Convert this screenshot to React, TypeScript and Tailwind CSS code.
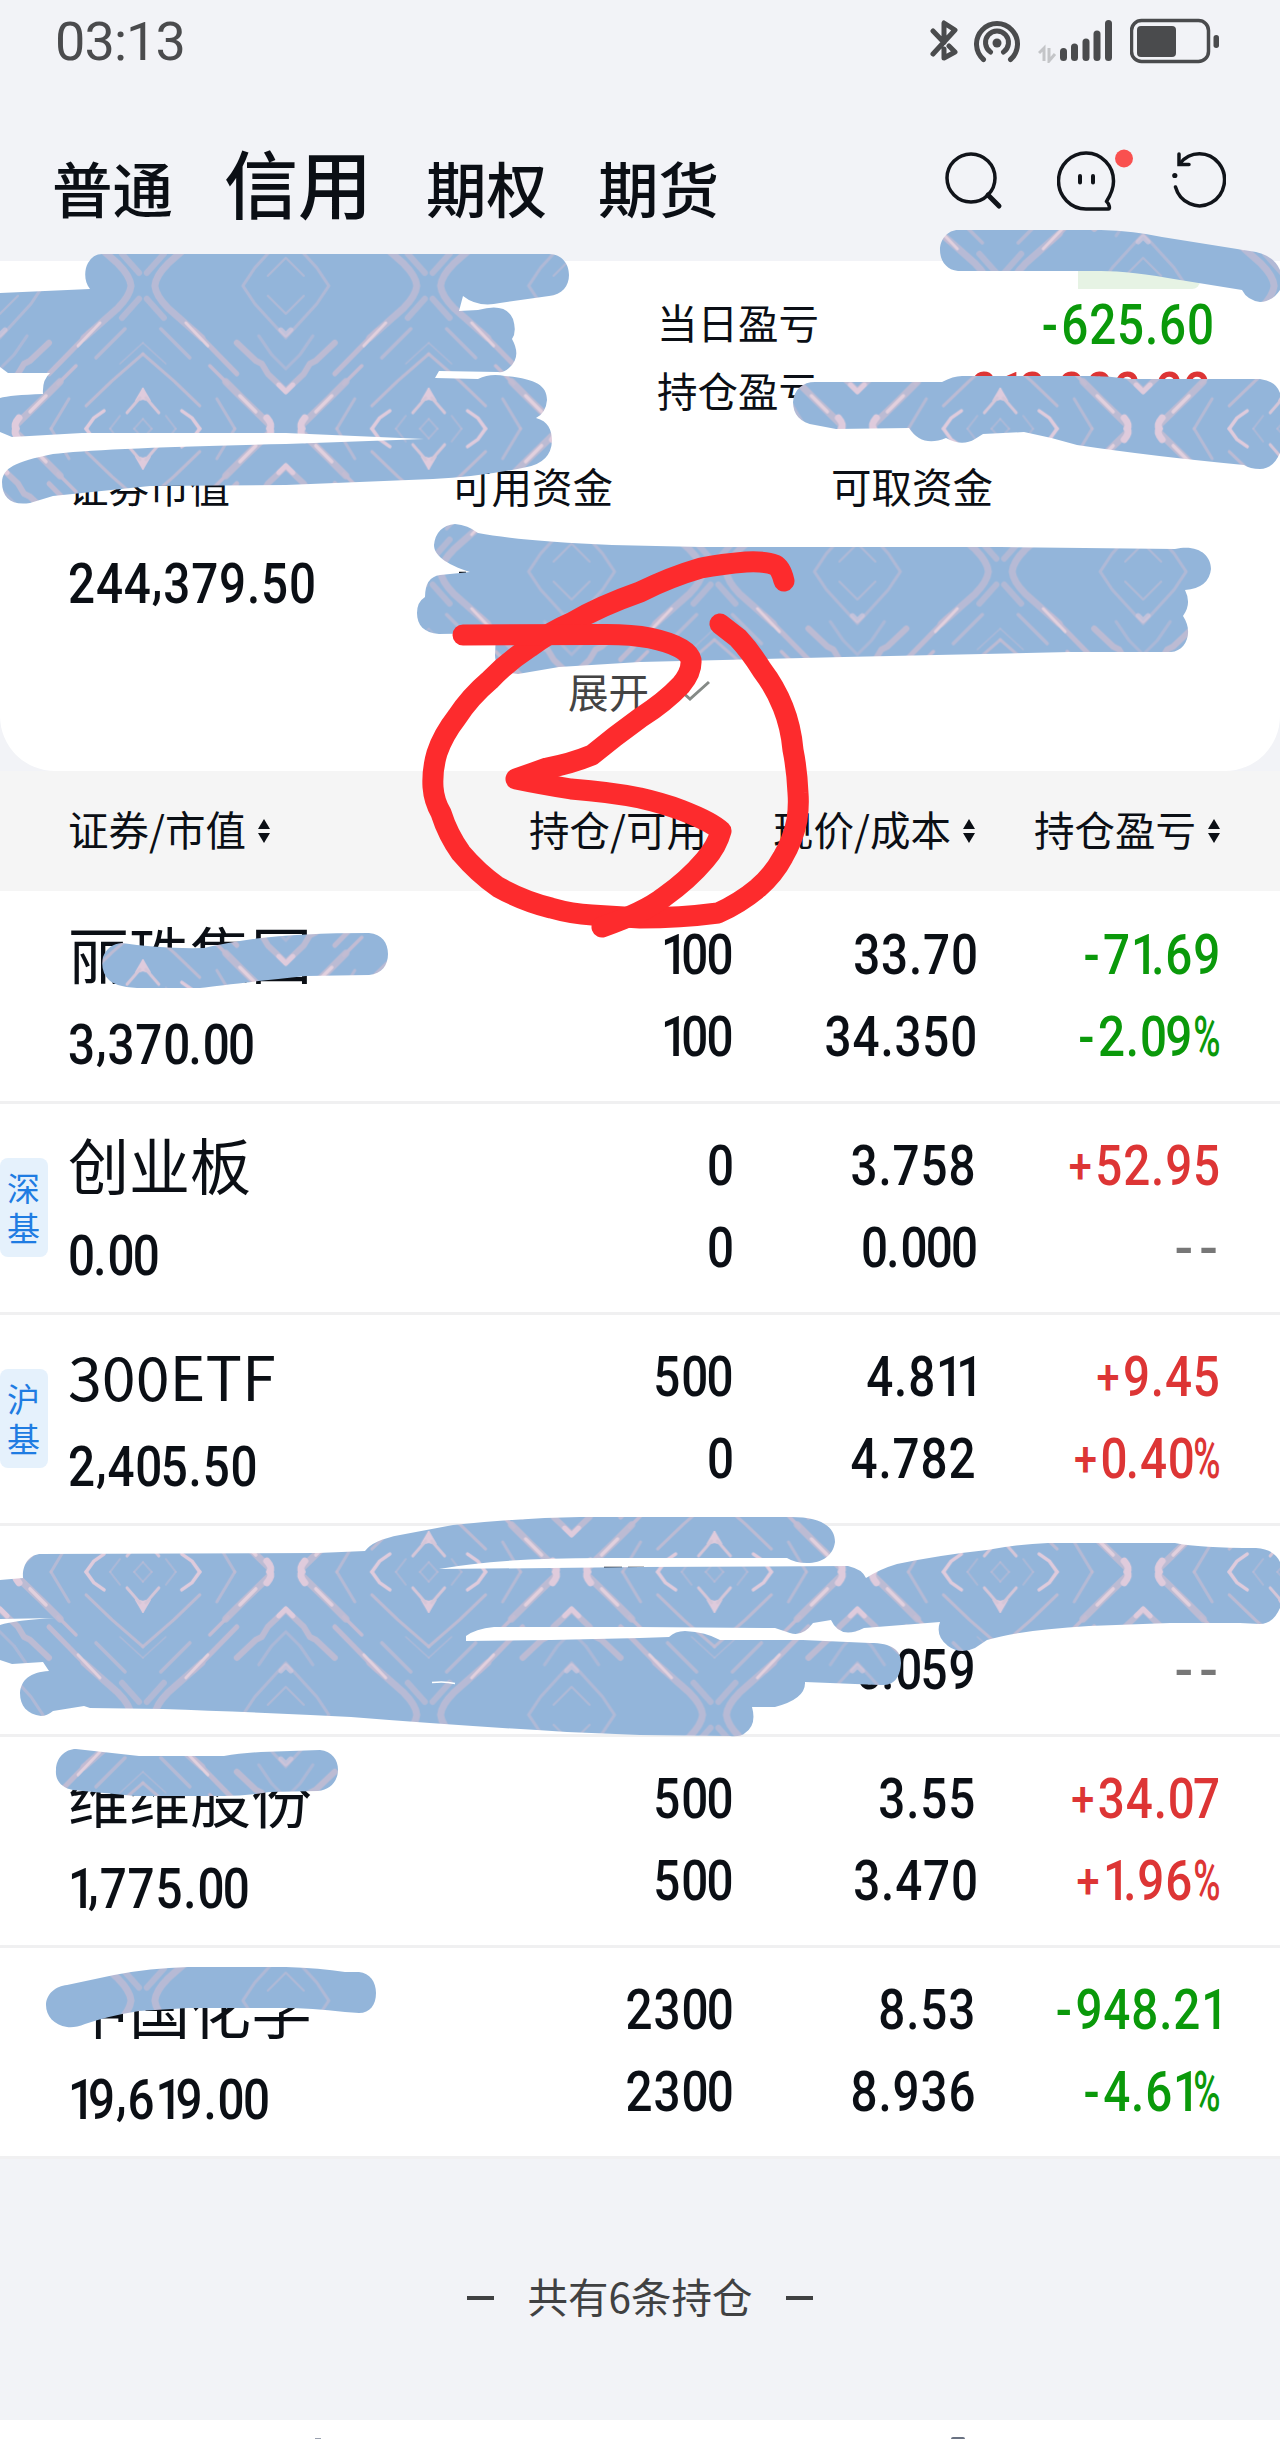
import clsx from 'clsx';

interface Holding {
  name: string;
  market?: string;
  value: string;
  amount: string;
  usable: string;
  price: string;
  cost: string;
  profit: string;
  ratio: string;
}

const holdings: Holding[] = [
  { name: '丽珠集团', value: '3,370.00', amount: '100', usable: '100', price: '33.70', cost: '34.350', profit: '-71.69', ratio: '-2.09%' },
  { name: '创业板', market: '深基', value: '0.00', amount: '0', usable: '0', price: '3.758', cost: '0.000', profit: '+52.95', ratio: '--' },
  { name: '300ETF', market: '沪基', value: '2,405.50', amount: '500', usable: '0', price: '4.811', cost: '4.782', profit: '+9.45', ratio: '+0.40%' },
  { name: '', value: '', amount: '', usable: '', price: '', cost: '0.059', profit: '', ratio: '--' },
  { name: '维维股份', value: '1,775.00', amount: '500', usable: '500', price: '3.55', cost: '3.470', profit: '+34.07', ratio: '+1.96%' },
  { name: '中国化学', value: '19,619.00', amount: '2300', usable: '2300', price: '8.53', cost: '8.936', profit: '-948.21', ratio: '-4.61%' },
];

const toneOf = (text: string) => {
  if (text === '--') return 'text-[#777777]';
  if (text.startsWith('+')) return 'text-[#dd3535]';
  if (text.startsWith('-')) return 'text-[#0a990a]';
  return 'text-[#0b0f15]';
};

const glyphClass: Record<string, string> = {
  '0': 'tracking-[-2px]',
  '1': 'tracking-[-8px]',
  ',': 'relative -top-[6px]',
  '+': 'text-[48px] relative -top-[2px] mr-[3px]',
  '-': 'mr-[3px]',
  '%': 'inline-block origin-left scale-x-[0.78] -mr-[9px]',
};

interface NumProps {
  text: string;
  left?: boolean;
  tone?: string;
}

const Num = ({ text, left, tone }: NumProps) => {
  const empty = text === '--';
  return (
    <span
      className={clsx(
        "relative top-[1px] inline-block whitespace-nowrap font-['Roboto',sans-serif] text-[55px] font-medium",
        left ? 'origin-left' : 'origin-right',
        empty ? 'tracking-[6px] -mr-[3px]' : 'scale-x-[0.865] tracking-[1px]',
        tone ?? toneOf(text)
      )}
    >
      {empty
        ? text
        : text.split(/([01,+%-])/).filter(Boolean).map((part, i) =>
            glyphClass[part] ? <span key={i} className={glyphClass[part]}>{part}</span> : part
          )}
    </span>
  );
};

const SortArrows = ({ hidden }: { hidden?: boolean }) => (
  <svg className={clsx('ml-[12px] w-[12px] h-[24px]', hidden && 'invisible')} viewBox="0 0 12 24" fill="#0b0f15">
    <path d="M6 0L12 10H0Z" />
    <path d="M6 24L0 14H12Z" />
  </svg>
);

const StatusBar = () => (
  <div className="h-[84px] pl-[55px] pr-[61px] flex items-center justify-between">
    <span className="font-['Roboto',sans-serif] text-[54px] leading-[84px] tracking-[-0.9px] text-[#4a4b4d]">03:13</span>
    <div className="-mt-[2px] flex items-center text-[#4a4b4d]">
      <svg className="w-[28px] h-[44px]" viewBox="0 0 28 44" fill="none" stroke="currentColor" strokeWidth="5" strokeLinecap="round" strokeLinejoin="round">
        <path d="M3 12L14 23.500M3 35L25 11L14 4V22M14 30V39L25 33L19 27" />
      </svg>
      <svg className="ml-[16px] w-[46px] h-[44px]" viewBox="0 0 46 44" fill="none" stroke="currentColor" strokeWidth="5" strokeLinecap="round">
        <circle cx="23" cy="24" r="4.500" fill="currentColor" stroke="none" />
        <path d="M16.500 33A11.500 11.500 0 1 1 29.500 33" />
        <path d="M9.500 40.500A20.500 20.500 0 1 1 36.500 40.500" />
      </svg>
      <svg className="ml-[18px] w-[74px] h-[44px]" viewBox="0 0 74 44" fill="currentColor">
        <path d="M1 34L6 29V42M11 29V42L17 35" fill="none" stroke="#c4c5c8" strokeWidth="3" />
        <rect x="22" y="29" width="7" height="13" rx="3.500" />
        <rect x="33" y="24.500" width="7" height="17.500" rx="3.500" />
        <rect x="44.500" y="19.500" width="7" height="22.500" rx="3.500" />
        <rect x="55.500" y="11.500" width="7" height="30.500" rx="3.500" />
        <rect x="67" y="1" width="7" height="41" rx="3.500" />
      </svg>
      <svg className="ml-[18px] w-[89px] h-[46px]" viewBox="0 0 89 46">
        <rect x="1.500" y="2.500" width="77" height="41" rx="10" fill="none" stroke="currentColor" strokeWidth="3.500" />
        <rect x="7" y="8" width="39" height="31" rx="4" fill="currentColor" />
        <rect x="83.500" y="17" width="5.500" height="13" rx="2.700" fill="currentColor" />
      </svg>
    </div>
  </div>
);

const TopTabs = () => (
  <div className="h-[177px] pl-[52px] pr-[54px] flex justify-between">
    <div className="flex items-baseline gap-[51px] pt-[47px] font-medium text-[60.500px] leading-[100px] text-[#0b0f15]">
      <span>普通</span>
      <span className="mr-[3px] text-[74px]">信用</span>
      <span>期权</span>
      <span>期货</span>
    </div>
    <div className="flex pt-[60px] text-[#11141a]">
      <svg className="w-[60px] h-[70px]" viewBox="0 0 60 70" fill="none" stroke="currentColor" strokeWidth="3.500">
        <circle cx="28" cy="34" r="24" />
        <path d="M45 51L56 62" strokeWidth="5" strokeLinecap="round" />
      </svg>
      <svg className="ml-[54px] w-[78px] h-[70px]" viewBox="0 0 78 70" fill="none" stroke="currentColor" strokeWidth="3.500" strokeLinejoin="round">
        <path d="M49.500 57.500C53 52 56.500 45 56.500 37.500A27.500 28 0 1 0 29 65H51.500C53.500 65 52 59.500 49.500 57.500Z" />
        <path d="M23 32V38.500M36 32V38.500" strokeWidth="4" strokeLinecap="round" />
        <circle cx="67" cy="14.500" r="9" fill="#f9504f" stroke="none" />
      </svg>
      <svg className="ml-[37px] w-[54px] h-[70px]" viewBox="0 0 54 70" fill="none" stroke="currentColor" strokeWidth="3.500">
        <path d="M8 19.500A25 26 0 1 1 3.500 43" strokeLinecap="round" />
        <path d="M7 10V20.500H17" strokeLinecap="round" />
        <circle cx="2.800" cy="31.500" r="2.600" fill="currentColor" stroke="none" />
      </svg>
    </div>
  </div>
);

const Summary = () => (
  <div className="relative h-[510px] bg-white rounded-b-[55px] text-[40.500px] text-[#0b0f15]">
    <div className="absolute left-[1078px] top-0 w-[122px] h-[28px] rounded-br-lg bg-[#e6f3e4]" />
    <div className="pt-[29px] ml-[657px] w-[555px]">
      <div className="h-[68px] flex items-center justify-between">
        <span className="-mt-1">当日盈亏</span>
        <Num text="-625.60" />
      </div>
      <div className="h-[68px] flex items-center justify-between">
        <span className="-mt-1">持仓盈亏</span>
        <Num text="212,222.22" tone="text-[#dd3535]" />
      </div>
    </div>
    <div className="mt-[26px] h-[68px] pl-[68px] grid grid-cols-[383px_380px_auto] items-center">
      <span>证券市值</span>
      <span>可用资金</span>
      <span>可取资金</span>
    </div>
    <div className="mt-[29px] h-[68px] pl-[68px] flex items-center">
      <Num text="244,379.50" left />
    </div>
    <div className="mt-[44px] h-[60px] pl-[568px] flex items-center text-[#444444]">
      <span>展开</span>
      <svg className="ml-[21px] w-[40px] h-[22px]" viewBox="0 0 40 22" fill="none" stroke="#858a87" strokeWidth="3">
        <path d="M1 2L20 19L39 2" />
      </svg>
    </div>
  </div>
);

const columns = ['证券/市值', '持仓/可用', '现价/成本', '持仓盈亏'];

const TableHead = () => (
  <div className="h-[120px] pl-[70px] grid grid-cols-[430px_231px_244px_245px] items-center bg-[#f5f5f5] text-[40.500px] text-[#0b0f15]">
    {columns.map((title, i) => (
      <div key={title} className={clsx('flex items-center whitespace-nowrap', i > 0 ? 'justify-end' : '-ml-[2px]')}>
        <span className="-mt-1">{title}</span>
        <SortArrows hidden={i === 1} />
      </div>
    ))}
  </div>
);

const HoldingRow = ({ item }: { item: Holding }) => (
  <div className="relative h-[211px] pl-[70px] grid grid-cols-[430px_231px_244px_245px] bg-white border-b-[3px] border-[#f0f0f1]">
    {item.market && (
      <div className="absolute left-0 top-[54px] w-[48px] h-[99px] px-[7px] pt-[9px] rounded-lg bg-[#e5f1fc] text-[33px] leading-[40px] break-all text-[#1f7ce2]">
        {item.market}
      </div>
    )}
    <div className="pt-[15px]">
      <p className="-ml-[2px] h-[90px] text-[61px] leading-[90px] text-[#0b0f15]">{item.name}</p>
      <p className="-ml-[2px] leading-[92px]"><Num text={item.value} left /></p>
    </div>
    {[
      [item.amount, item.usable],
      [item.price, item.cost],
      [item.profit, item.ratio],
    ].map(([first, second], i) => (
      <div key={i} className="pt-[20px] -mr-[1px] text-right leading-[82px]">
        <p className="h-[82px]"><Num text={first} /></p>
        <p className="h-[82px]"><Num text={second} /></p>
      </div>
    ))}
  </div>
);

// One quarter of the mirrored weave tile
const WeaveQuarter = () => (
  <g id="weave" fill="none" stroke="#c3bcd3" strokeLinecap="round" strokeLinejoin="round">
    <path d="M43 0L31 18L0 52" strokeWidth="3" opacity="0.6" />
    <path d="M18 10L0 28" strokeWidth="2" opacity="0.6" />
    <path d="M131 0Q130 10 118 22L84 52" strokeWidth="7" opacity="0.75" />
    <path d="M92 44L49 88" strokeWidth="5" opacity="0.9" />
    <path d="M100 37L78 60" strokeWidth="3" stroke="#e2d0dd" />
    <path d="M139 13L122 32" strokeWidth="6" opacity="0.65" />
    <path d="M125 43L112 56L96 72" strokeWidth="3.500" opacity="0.7" />
    <path d="M143 68L112 95L86 120" strokeWidth="3" opacity="0.85" />
    <path d="M143 57L120 78" strokeWidth="1.500" opacity="0.5" />
    <path d="M49 57L30 75L24 78L18 88L0 105" strokeWidth="6" opacity="0.85" />
    <path d="M7 99L0 106" strokeWidth="5" stroke="#dfcbdc" />
    <path d="M5 44L0 49" strokeWidth="5" stroke="#dfcbdc" opacity="0.6" />
    <path d="M27 50L14 69L0 83" strokeWidth="3" opacity="0.5" />
    <path d="M76 80L58 98" strokeWidth="3.500" />
    <path d="M60 96L41 115L17 138" strokeWidth="7" opacity="0.85" />
    <path d="M46 110L30 126" strokeWidth="3.500" stroke="#e2d0dd" />
    <path d="M19 132Q13 139 16 143" strokeWidth="7" stroke="#dfcbdc" />
    <path d="M143 103L136 115L143 113Z" strokeWidth="2" stroke="#dfcbdc" fill="#dfcbdc" />
    <path d="M140 112L127 127" strokeWidth="3" stroke="#d5c6d8" />
    <path d="M69 113L51 143" strokeWidth="3" opacity="0.7" />
    <path d="M104 125L94 132L86 143" strokeWidth="3.500" stroke="#dfcbdc" />
    <path d="M143 133L134 143M120 130L110 143" strokeWidth="1.800" opacity="0.5" />
  </g>
);

const brushPaths = [
  'M102 254H549C562 254 569 264 569 275S562 295 549 296L500 303Q478 308 463 296L459 311L478 310Q506 302 513 319Q517 332 512 339Q522 357 509 368Q504 373 498 372L439 371L435 378L478 379Q490 373 505 376C535 379 547 385 547 400Q546 413 536 418C548 421 552 430 552 441Q551 462 527 467Q480 477 433 479L286 485L150 486L53 496L30 503C12 506 2 498 2 482C3 468 14 462 53 454Q100 448 286 444L424 439L286 433H82L12 437L0 432V398Q10 395 43 394Q42 380 50 373L8 373L0 367V293L90 289C84 282 84 270 88 263Q93 254 102 254Z',
  'M958 230L1101 230Q1135 231 1162 237L1256 252Q1274 256 1280 270V290Q1272 302 1260 302Q1247 300 1242 290L1180 280Q1130 271 1101 271H958C946 270 940 260 940 250C940 239 948 230 958 230Z',
  'M815 382H942Q953 376 962 376H1089Q1110 376 1130 379H1260Q1276 381 1280 393V453Q1273 469 1260 469Q1250 469 1244 465Q1150 456 1077 445Q1050 437 1024 432L983 434L975 439Q962 447 946 438Q922 448 909 428L836 429L815 425C800 423 793 414 793 402C794 389 803 382 815 382Z',
  'M455 524Q468 525 478 533Q520 541 612 545L700 547L1000 547L1175 549C1198 544 1211 555 1211 569Q1209 588 1185 590Q1192 604 1183 616C1194 632 1186 651 1171 652H1069L844 657L640 662L559 667L518 674Q495 672 495 655L496 633L439 634C424 633 417 625 417 613Q417 602 425 597Q425 577 440 575L470 572C445 564 434 555 434 545Q436 526 455 524Z',
  'M122 943Q160 949 204 948Q225 943 253 939Q300 933 369 933C382 934 388 943 388 954S382 974 369 975L306 976Q230 984 200 988H143Q118 988 109 980Q100 971 103 957Q108 944 122 943Z',
  'M41 1554L318 1553L365 1551Q373 1540 400 1535L453 1525Q520 1518 580 1517H791C820 1517 835 1526 835 1542C833 1556 822 1563 807 1563Q795 1563 787 1558H600Q500 1558 439 1569L551 1568L640 1567L848 1566Q862 1569 866 1578Q880 1569 897 1564Q940 1555 987 1550Q1020 1544 1048 1543H1175Q1200 1548 1256 1548Q1274 1549 1280 1562V1608Q1273 1624 1260 1624L1240 1623H1170L1089 1626Q1020 1630 987 1640L975 1648Q960 1655 948 1646Q935 1636 940 1622L864 1628Q840 1640 831 1620L813 1623Q803 1637 790 1633L775 1628L640 1627H494Q475 1629 466 1636V1641L551 1640L640 1638L669 1637Q675 1631 685 1631Q706 1632 720 1640H803L870 1643C892 1643 901 1650 901 1663C900 1680 892 1686 880 1685L805 1682Q806 1699 775 1707H752Q757 1725 745 1733Q741 1737 730 1736L640 1735L567 1732Q450 1725 351 1717Q250 1712 163 1709L90 1708L84 1706L53 1711Q47 1716 41 1716C27 1714 20 1706 20 1693C21 1680 30 1672 49 1671L43 1662L12 1664L0 1660V1625Q15 1620 55 1618L0 1619V1580L23 1578C22 1564 30 1554 41 1554Z',
  'M76 1749L139 1756H224Q240 1753 261 1752L320 1750C332 1751 338 1760 338 1770S331 1790 318 1791L269 1792Q245 1796 224 1796H135L73 1790C62 1788 55 1781 56 1770C56 1758 65 1749 76 1749Z',
  'M67 1985L114 1975Q150 1968 188 1967H286Q320 1968 345 1972L359 1972C370 1973 376 1982 376 1993C376 2005 370 2013 359 2013L345 2012Q310 2008 286 2008H188L139 2011Q108 2016 85 2024Q75 2028 67 2027C54 2025 46 2016 46 2005C46 1994 56 1986 67 1985Z',
];

const BrushLayer = () => (
  <svg className="absolute inset-0 w-[1280px] h-[2439px] pointer-events-none" viewBox="0 0 1280 2439">
    <defs>
      <WeaveQuarter />
      <pattern id="weave-tile" width="285.800" height="285.800" patternUnits="userSpaceOnUse">
        <rect width="286" height="286" fill="#93b5da" />
        <use href="#weave" />
        <use href="#weave" transform="translate(285.800 0) scale(-1 1)" />
        <use href="#weave" transform="translate(0 285.800) scale(1 -1)" />
        <use href="#weave" transform="translate(285.800 285.800) scale(-1 -1)" />
      </pattern>
    </defs>
    <path d="M604 1568H622M628 1568H644M459 573H466" stroke="#0b0f15" strokeWidth="2.500" />
    {brushPaths.map((d, i) => (
      <path key={i} d={d} fill="url(#weave-tile)" />
    ))}
    <path d="M432 1682.500Q445 1681 455 1683.500" stroke="#ffffff" strokeWidth="1.500" fill="none" />
    <g fill="none" stroke="#fd2b2d" strokeWidth="21" strokeLinecap="round" strokeLinejoin="round">
      <path d="M784 581Q781 568 775 565Q765 561 746 562Q722 564 701 568Q670 577 640 592Q600 606 571 623Q550 632 530 647Q507 662 490 680Q470 697 457 717Q443 735 437 753Q432 770 433 787Q434 801 441 813Q448 835 461 853Q478 873 498 887Q523 901 551 908Q572 914 592 915L640 918Q680 918 718 913Q740 903 758 888Q774 874 783 857Q793 840 797 820Q799 806 798 793Q797 770 793 750Q791 727 783 707Q775 687 762 670Q751 652 738 638L720 624" />
      <path d="M463 635L600 634.500Q630 634 650 638Q688 646 691 660Q692 672 681 685Q665 702 640 718Q615 736 592 755Q570 764 547 768L516 779Q540 784 571 789Q610 792 640 798Q662 803 681 810Q712 822 721 831Q717 846 705 860Q688 880 664 897Q645 912 602 927" />
    </g>
  </svg>
);

const App = () => (
  <div className="relative w-[1280px] h-[2439px] overflow-hidden flex flex-col bg-[#f2f3f7] font-['Noto_Sans_CJK_SC',sans-serif]">
    <StatusBar />
    <TopTabs />
    <Summary />
    <TableHead />
    <div className="pt-[2px] bg-white">
      {holdings.map((item, i) => (
        <HoldingRow key={i} item={item} />
      ))}
    </div>
    <div className="h-[261px] pt-[17px] flex items-center justify-center gap-[34px] text-[40.500px] text-[#404142]">
      <span className="w-[27px] h-[4px] bg-[#404142]" />
      <span className="-mt-1">共有6条持仓</span>
      <span className="w-[27px] h-[4px] bg-[#404142]" />
    </div>
    <div className="flex-1 flex items-end justify-around bg-white">
      <span className="w-[6px] h-[1px] bg-gray-400" />
      <span className="w-[14px] h-[2px] rounded-t-full bg-gray-500" />
    </div>
    <BrushLayer />
  </div>
);

export default App;
